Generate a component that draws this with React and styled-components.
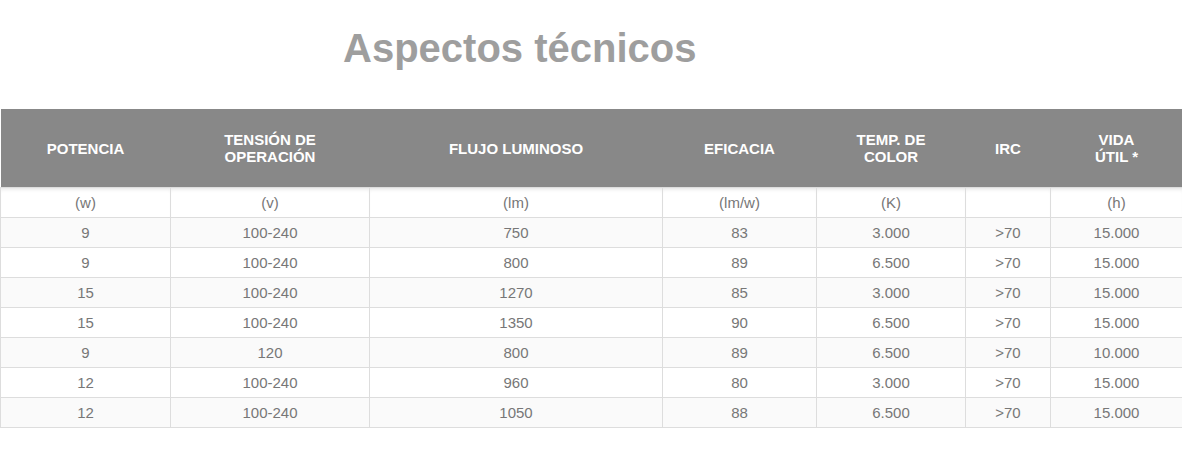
import React from "react";
import styled, { createGlobalStyle } from "styled-components";

const Global = createGlobalStyle`
  html, body { margin: 0; padding: 0; background: #fff; }
  body { font-family: "Liberation Sans", Arial, sans-serif; }
`;

const Page = styled.div`
  width: 1182px;
  padding-top: 25px;
`;

const Title = styled.h1`
  margin: 0 0 38px 0;
  padding-left: 343px;
  font-size: 40px;
  line-height: 46px;
  font-weight: 700;
  color: #9e9e9e;
`;

const Table = styled.table`
  width: 1182px;
  table-layout: fixed;
  border-collapse: collapse;
  border-spacing: 0;
`;

const HeadCell = styled.th`
  background: #888888;
  color: #fff;
  font-size: 15px;
  line-height: 17px;
  font-weight: 700;
  text-transform: uppercase;
  text-align: center;
  vertical-align: middle;
  height: 78px;
  padding: 0 8px;
  border: none;
`;

const Row = styled.tr`
  background: ${(p) => (p.$striped ? "#fafafa" : "#ffffff")};
`;

const Cell = styled.td`
  border: 1px solid #dddddd;
  height: 30px;
  padding: 0 8px;
  box-sizing: border-box;
  text-align: center;
  vertical-align: middle;
  font-size: 15px;
  line-height: 17px;
  color: #777777;
  ${(p) =>
    p.$first &&
    `box-shadow: inset 0 4px 4px -3px rgba(0,0,0,0.12);`}
`;

const cols = [170, 199, 293, 154, 149, 85, 132];

const headers = [
  ["POTENCIA"],
  ["TENSIÓN DE", "OPERACIÓN"],
  ["FLUJO LUMINOSO"],
  ["EFICACIA"],
  ["TEMP. DE", "COLOR"],
  ["IRC"],
  ["VIDA", "ÚTIL *"],
];

const rows = [
  ["(w)", "(v)", "(lm)", "(lm/w)", "(K)", "", "(h)"],
  ["9", "100-240", "750", "83", "3.000", ">70", "15.000"],
  ["9", "100-240", "800", "89", "6.500", ">70", "15.000"],
  ["15", "100-240", "1270", "85", "3.000", ">70", "15.000"],
  ["15", "100-240", "1350", "90", "6.500", ">70", "15.000"],
  ["9", "120", "800", "89", "6.500", ">70", "10.000"],
  ["12", "100-240", "960", "80", "3.000", ">70", "15.000"],
  ["12", "100-240", "1050", "88", "6.500", ">70", "15.000"],
];

export default function App() {
  return (
    <Page>
      <Global />
      <Title>Aspectos técnicos</Title>
      <Table>
        <colgroup>
          {cols.map((w, i) => (
            <col key={i} style={{ width: w }} />
          ))}
        </colgroup>
        <thead>
          <tr>
            {headers.map((h, i) => (
              <HeadCell key={i}>
                {h.map((line, j) => (
                  <React.Fragment key={j}>
                    {j > 0 && <br />}
                    {line}
                  </React.Fragment>
                ))}
              </HeadCell>
            ))}
          </tr>
        </thead>
        <tbody>
          {rows.map((r, i) => (
            <Row key={i} $striped={i % 2 === 1}>
              {r.map((c, j) => (
                <Cell key={j} $first={i === 0}>
                  {c}
                </Cell>
              ))}
            </Row>
          ))}
        </tbody>
      </Table>
    </Page>
  );
}
